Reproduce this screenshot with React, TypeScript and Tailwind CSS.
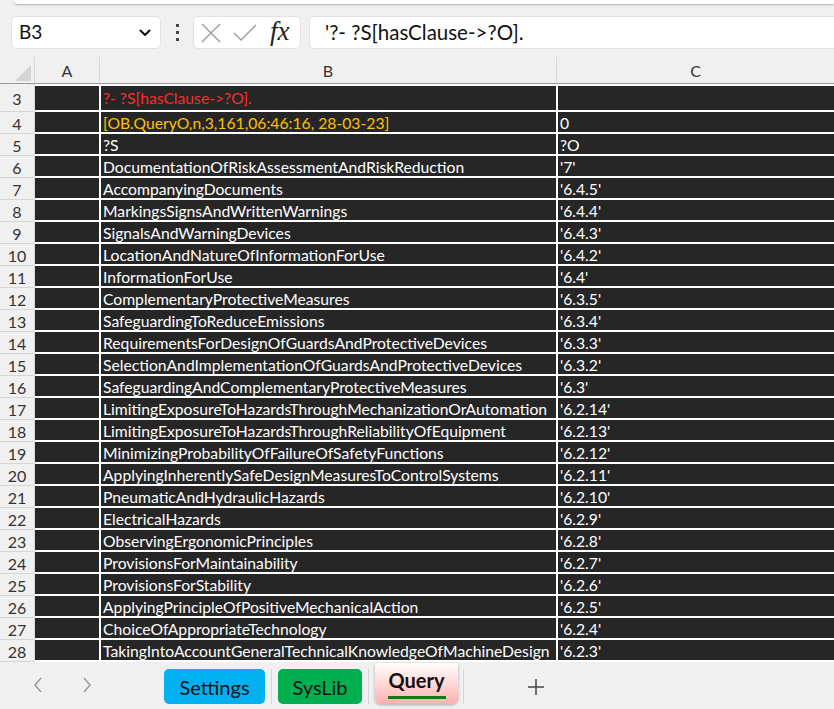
import React from "react";

const rows: [string, string, string, string][] = [
  ["4", "[OB.QueryO,n,3,161,06:46:16, 28-03-23]", "0", "text-[#ffc000]"],
  ["5", "?S", "?O", ""],
  ["6", "DocumentationOfRiskAssessmentAndRiskReduction", "'7'", ""],
  ["7", "AccompanyingDocuments", "'6.4.5'", ""],
  ["8", "MarkingsSignsAndWrittenWarnings", "'6.4.4'", ""],
  ["9", "SignalsAndWarningDevices", "'6.4.3'", ""],
  ["10", "LocationAndNatureOfInformationForUse", "'6.4.2'", ""],
  ["11", "InformationForUse", "'6.4'", ""],
  ["12", "ComplementaryProtectiveMeasures", "'6.3.5'", ""],
  ["13", "SafeguardingToReduceEmissions", "'6.3.4'", ""],
  ["14", "RequirementsForDesignOfGuardsAndProtectiveDevices", "'6.3.3'", ""],
  ["15", "SelectionAndImplementationOfGuardsAndProtectiveDevices", "'6.3.2'", ""],
  ["16", "SafeguardingAndComplementaryProtectiveMeasures", "'6.3'", ""],
  ["17", "LimitingExposureToHazardsThroughMechanizationOrAutomation", "'6.2.14'", ""],
  ["18", "LimitingExposureToHazardsThroughReliabilityOfEquipment", "'6.2.13'", ""],
  ["19", "MinimizingProbabilityOfFailureOfSafetyFunctions", "'6.2.12'", ""],
  ["20", "ApplyingInherentlySafeDesignMeasuresToControlSystems", "'6.2.11'", ""],
  ["21", "PneumaticAndHydraulicHazards", "'6.2.10'", ""],
  ["22", "ElectricalHazards", "'6.2.9'", ""],
  ["23", "ObservingErgonomicPrinciples", "'6.2.8'", ""],
  ["24", "ProvisionsForMaintainability", "'6.2.7'", ""],
  ["25", "ProvisionsForStability", "'6.2.6'", ""],
  ["26", "ApplyingPrincipleOfPositiveMechanicalAction", "'6.2.5'", ""],
  ["27", "ChoiceOfAppropriateTechnology", "'6.2.4'", ""],
  ["28", "TakingIntoAccountGeneralTechnicalKnowledgeOfMachineDesign", "'6.2.3'", ""],
];

function Row({ n, b, c, cls, tall }: { n: string; b: string; c: string; cls: string; tall?: boolean }) {
  return (
    <div className={`flex ${tall ? "h-[28px]" : "h-[22px]"}`}>
      <div className="w-[35px] shrink-0 border-r border-b border-[#d6d6d6] bg-[#f0f0f0] flex items-center justify-center text-[16px] text-[#333] leading-none">
        <span className="pt-[3px]">{n}</span>
      </div>
      <div className={`flex-1 flex bg-white pb-[2px] ${tall ? "pt-[2px]" : ""}`}>
        <div className="w-[64px] shrink-0 bg-[#262626]" />
        <div className={`w-[455px] shrink-0 ml-[2px] bg-[#262626] pl-[2px] ${tall ? "pt-[1px]" : "pt-[3px]"} flex items-center whitespace-nowrap text-[15.7px] leading-none ${cls || "text-white"}`}>
          {b}
        </div>
        <div className="flex-1 ml-[2px] bg-[#262626] pl-[2px] pt-[3px] flex items-center whitespace-nowrap text-[15.7px] leading-none text-white">
          {c}
        </div>
      </div>
    </div>
  );
}

export default function App() {
  return (
    <div className="w-[834px] h-[709px] bg-[#f0f0f0] overflow-hidden flex flex-col" style={{ fontFamily: "Lato, 'Liberation Sans', sans-serif" }}>
      {/* top strip */}
      <div className="h-[4px] ml-[14px] bg-white rounded-bl-[6px] shadow-[0_1px_2px_rgba(0,0,0,0.25)]" />
      {/* formula bar */}
      <div className="mt-[12px] h-[33px] flex items-stretch">
        <div className="ml-[11px] w-[150px] bg-white border border-[#e2e2e2] rounded-[5px] flex items-center pl-[7px] pr-[9px] justify-between">
          <span className="text-[19px] text-[#111]">B3</span>
          <svg width="12" height="8" viewBox="0 0 12 8"><path d="M1.5 1.5 L6 6 L10.5 1.5" fill="none" stroke="#111" strokeWidth="2" strokeLinecap="round" strokeLinejoin="round" /></svg>
        </div>
        <div className="w-[32px] flex flex-col items-center justify-center gap-[4px]">
          <div className="w-[3px] h-[3px] bg-[#444]" />
          <div className="w-[3px] h-[3px] bg-[#444]" />
          <div className="w-[3px] h-[3px] bg-[#444]" />
        </div>
        <div className="w-[108px] bg-white border border-[#e2e2e2] rounded-[5px] flex items-center">
          <svg className="ml-[5px]" width="24" height="24" viewBox="0 0 24 24"><path d="M3 3 L21 21 M21 3 L3 21" stroke="#a0a0a0" strokeWidth="1.5" fill="none" /></svg>
          <svg className="ml-[9px]" width="26" height="24" viewBox="0 0 26 24"><path d="M2 12 L9 19 L24 4" stroke="#a0a0a0" strokeWidth="1.5" fill="none" /></svg>
          <span className="ml-[12px] text-[27px] italic text-[#222] leading-none pb-[2px]" style={{ fontFamily: "'Liberation Serif', serif" }}>fx</span>
        </div>
        <div className="ml-[8px] flex-1 bg-white border border-[#e2e2e2] border-r-0 rounded-l-[5px] flex items-center pl-[15px] text-[20.5px] text-[#111]">
          '?- ?S[hasClause-&gt;?O].
        </div>
      </div>
      {/* column headers */}
      <div className="mt-[8px] h-[27px] flex border-b border-[#9a9a9a]">
        <div className="w-[35px] shrink-0 border-r border-[#d6d6d6] relative">
          <div className="absolute right-[3px] bottom-[2px] w-0 h-0 border-l-[16px] border-l-transparent border-b-[16px] border-b-[#d4d4d4]" />
        </div>
        <div className="w-[65px] shrink-0 border-r border-[#d6d6d6] flex items-center justify-center text-[16px] text-[#333] pt-[1px]">A</div>
        <div className="w-[457px] shrink-0 border-r border-[#d6d6d6] flex items-center justify-center text-[16px] text-[#333] pt-[1px]">B</div>
        <div className="flex-1 flex items-center justify-center text-[16px] text-[#333] pt-[1px]">C</div>
      </div>
      {/* grid */}
      <Row n="3" b="?- ?S[hasClause->?O]." c="" cls="text-[#ff2a2a]" tall />
      {rows.map(([n, b, c, cls]) => (
        <Row key={n} n={n} b={b} c={c} cls={cls} />
      ))}
      {/* tab bar */}
      <div className="flex-1 flex items-start relative">
        <div className="flex items-center h-[46px] w-[160px] shrink-0">
          <svg className="ml-[32px]" width="12" height="18" viewBox="0 0 12 18"><path d="M9 2 L3 9 L9 16" fill="none" stroke="#9a9a9a" strokeWidth="1.5" /></svg>
          <svg className="ml-[37px]" width="12" height="18" viewBox="0 0 12 18"><path d="M3 2 L9 9 L3 16" fill="none" stroke="#9a9a9a" strokeWidth="1.5" /></svg>
        </div>
        <div className="mt-[7px] ml-[4px] w-[101px] h-[35px] rounded-[5px] bg-[#00b0f0] flex items-center justify-center text-[20px] text-[#111]">Settings</div>
        <div className="mt-[7px] ml-[6px] w-[1px] h-[35px] bg-[#d6d6d6]" />
        <div className="mt-[7px] ml-[6px] w-[84px] h-[35px] rounded-[5px] bg-[#00b050] flex items-center justify-center text-[20px] text-[#111]">SysLib</div>
        <div className="mt-[7px] ml-[6px] w-[1px] h-[35px] bg-[#d6d6d6]" />
        <div className="mt-[1px] ml-[6px] w-[83px] h-[41px] rounded-b-[6px] rounded-t-[3px] bg-gradient-to-b from-white to-[#ffb0b0] shadow-[0_1px_3px_rgba(0,0,0,0.3)] flex flex-col items-center justify-center">
          <span className="text-[20px] font-bold text-[#111] leading-none mt-[2px]">Query</span>
          <div className="mt-[6px] w-[58px] h-[3px] bg-[#107c10]" />
        </div>
        <div className="mt-[7px] ml-[5px] w-[1px] h-[35px] bg-[#d6d6d6]" />
        <svg className="mt-[15px] ml-[62px]" width="20" height="20" viewBox="0 0 20 20"><path d="M10 2 V18 M2 10 H18" stroke="#444" strokeWidth="1.5" /></svg>
      </div>
    </div>
  );
}
